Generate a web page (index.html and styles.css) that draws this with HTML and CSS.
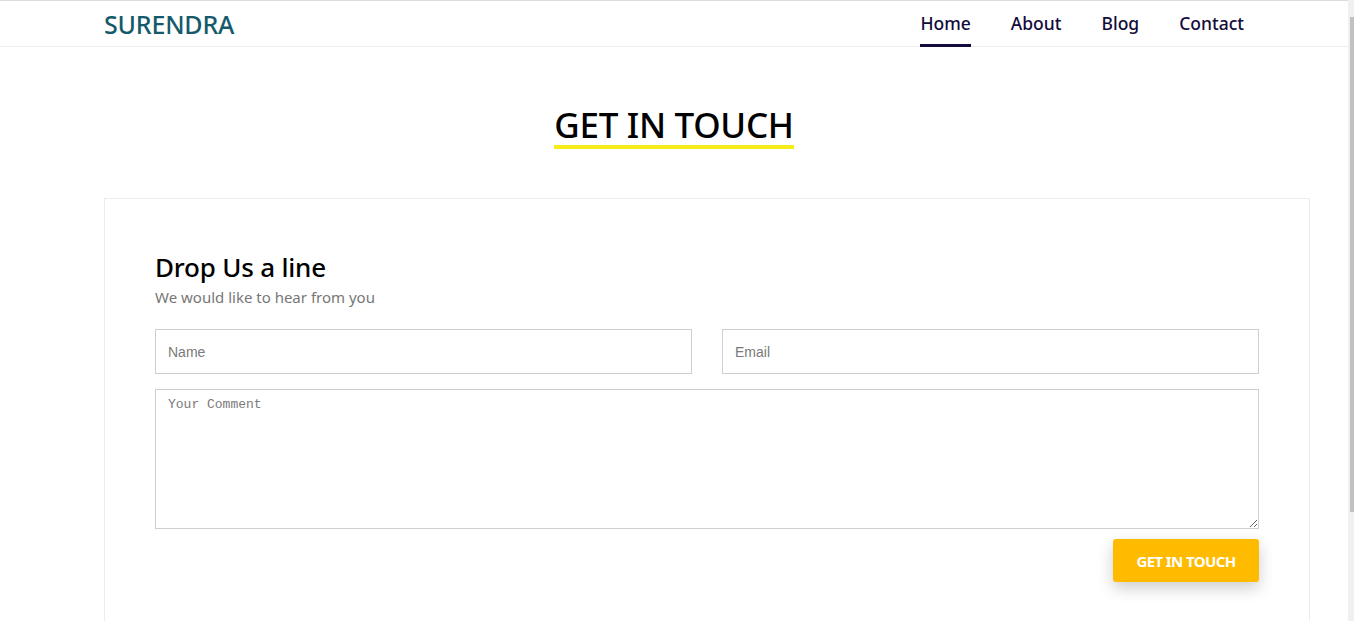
FILE: index.html
```html
<!DOCTYPE html>
<html lang="en">
<head>
<meta charset="utf-8">
<title>Contact - Surendra</title>
<link rel="stylesheet" href="styles.css">
</head>
<body>
<div class="page">
  <div class="main">
    <header class="header">
      <div class="container header-inner">
        <a class="logo" href="#">SURENDRA</a>
        <nav class="nav">
          <a class="nav-link active" href="#">Home</a>
          <a class="nav-link" href="#">About</a>
          <a class="nav-link" href="#">Blog</a>
          <a class="nav-link" href="#">Contact</a>
        </nav>
      </div>
    </header>
    <section class="contact">
      <div class="title-wrap">
        <h1 class="title">GET IN TOUCH</h1>
      </div>
      <div class="card-wrap">
        <div class="card">
          <h2 class="card-title">Drop Us a line</h2>
          <p class="card-sub">We would like to hear from you</p>
          <form class="form">
            <div class="row">
              <input class="field" type="text" placeholder="Name">
              <input class="field" type="email" placeholder="Email">
            </div>
            <textarea class="comment" placeholder="Your Comment"></textarea>
            <div class="actions">
              <button class="btn" type="button">GET IN TOUCH</button>
            </div>
          </form>
        </div>
      </div>
    </section>
  </div>
  <div class="scrollbar"><div class="scroll-arrow"></div><div class="scroll-thumb"></div></div>
</div>
</body>
</html>
```

FILE: styles.css
```css
* { box-sizing: border-box; }
html, body { margin: 0; padding: 0; height: 100%; overflow: hidden; }
body { font-family: "Noto Sans", "Open Sans", sans-serif; background: #fff; color: #000; }

.page { display: flex; height: 621px; }
.main { flex: 1; min-width: 0; }

.scrollbar { width: 6px; background: #f0f0f0; display: flex; flex-direction: column; align-items: flex-end; }
.scroll-arrow { height: 17px; width: 4px; }
.scroll-thumb { width: 4px; height: 495px; background: #c1c1c1; }

.container { width: 1140px; margin: 0 auto; }

.header { border-top: 1px solid #dcdcdc; border-bottom: 1px solid #eee; height: 47px; }
.header-inner { display: flex; justify-content: space-between; align-items: stretch; height: 45px; }
.logo { font-size: 25px; font-weight: 500; color: #155a6b; text-decoration: none; letter-spacing: -0.2px; line-height: 47px; }
.nav { display: flex; gap: 40px; }
.nav-link { font-size: 17.5px; font-weight: 500; color: #120b3b; text-decoration: none; line-height: 45px; height: 46px; border-bottom: 3px solid transparent; }
.nav-link.active { border-bottom-color: #120b3b; }

.contact { padding-top: 58px; }
.title-wrap { display: flex; justify-content: center; }
.title { margin: 0; font-size: 35px; font-weight: 500; line-height: 40px; color: #000; border-bottom: 4px solid #f7ec1a; padding-bottom: 0; letter-spacing: -0.3px; }

.card-wrap { padding-left: 104px; padding-top: 49px; }
.card { width: 1206px; border: 1px solid #ececec; border-bottom: none; padding: 52px 50px 40px 50px; }
.card-title { margin: 0; font-size: 26px; font-weight: 500; line-height: 32px; color: #000; letter-spacing: -0.2px; }
.card-sub { margin: 4px 0 0; font-size: 15px; color: #777; line-height: 20px; }

.form { margin-top: 22px; display: flex; flex-direction: column; gap: 15px; }
.row { display: flex; gap: 30px; }
.field { flex: 1; height: 45px; border: 1px solid #cfcfcf; border-radius: 0; padding: 0 12px; font-family: "Liberation Sans", Arial, sans-serif; font-size: 14px; color: #333; outline: none; }
.field::placeholder { color: #7a7a7a; }
.comment { height: 140px; border: 1px solid #cfcfcf; border-radius: 0; padding: 7px 12px; font-family: "Liberation Mono", "DejaVu Sans Mono", monospace; font-size: 13px; color: #333; resize: vertical; outline: none; }
.comment::placeholder { color: #7a7a7a; }

.actions { display: flex; justify-content: flex-end; margin-top: -5px; }
.btn { width: 146px; height: 43px; background: #ffbb00; border: none; border-radius: 3px; color: #fff; font-family: "Noto Sans", sans-serif; font-weight: 700; font-size: 15px; letter-spacing: -0.6px; box-shadow: 0 6px 16px rgba(0,0,0,0.2); cursor: pointer; }
```
